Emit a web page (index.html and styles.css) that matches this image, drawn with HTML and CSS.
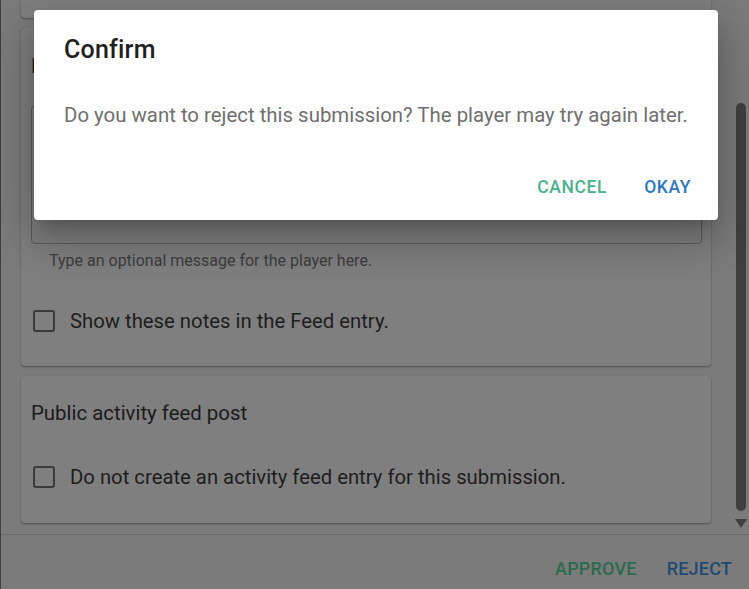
FILE: index.html
```html
<!DOCTYPE html>
<html>
<head>
<meta charset="utf-8">
<link rel="stylesheet" href="styles.css">
</head>
<body>
<div class="app">
  <div class="main">
    <div class="content">
      <div class="card cut"></div>
      <div class="card notes">
        <div class="card-title">Rejection notes</div>
        <div class="textarea"></div>
        <div class="hint">Type an optional message for the player here.</div>
        <label class="check"><span class="box"></span><span>Show these notes in the Feed entry.</span></label>
      </div>
      <div class="card feed">
        <div class="card-title">Public activity feed post</div>
        <label class="check"><span class="box"></span><span>Do not create an activity feed entry for this submission.</span></label>
      </div>
    </div>
    <div class="scrollbar">
      <div class="thumb"></div>
      <div class="arrow"></div>
    </div>
  </div>
  <div class="actions">
    <span class="btn approve">APPROVE</span>
    <span class="btn reject">REJECT</span>
  </div>
</div>
<div class="modal">
  <div class="modal-title">Confirm</div>
  <div class="modal-body">Do you want to reject this submission? The player may try again later.</div>
  <div class="modal-actions">
    <span class="mbtn cancel">CANCEL</span>
    <span class="mbtn okay">OKAY</span>
  </div>
</div>
</body>
</html>
```
FILE: styles.css
```css
html, body { margin: 0; padding: 0; }
body {
  width: 749px;
  height: 589px;
  overflow: hidden;
  background: #7b7b7b;
  font-family: Roboto, "Liberation Sans", sans-serif;
  position: relative;
}
.app {
  height: 589px;
  border-left: 1px solid #3e3e3e;
  box-sizing: border-box;
  display: flex;
  flex-direction: column;
}
.main {
  height: 535px;
  flex: none;
  display: flex;
  border-bottom: 1px solid #6b6b6b;
  box-sizing: border-box;
}
.content {
  width: 690px;
  margin-left: 20px;
  display: flex;
  flex-direction: column;
  gap: 10px;
}
.card {
  background: #7f7f7f;
  border-radius: 4px;
  box-shadow: 0 1px 2px rgba(0,0,0,0.35), 0 0 1px rgba(0,0,0,0.15);
  padding: 0 9px 0 10px;
}
.card.cut { height: 18px; border-radius: 0 0 4px 4px; }
.card.notes { height: 338px; box-sizing: border-box; padding-top: 26px; }
.card.feed { height: 147px; box-sizing: border-box; padding-top: 25px; }
.card-title {
  font-size: 20.4px;
  line-height: 24px;
  color: #1b1b1b;
}
.textarea {
  margin-top: 27px;
  height: 139px;
  box-sizing: border-box;
  border: 1px solid #5c5c5c;
  border-radius: 4px;
}
.hint {
  font-size: 16px;
  line-height: 20px;
  color: #3c3c3c;
  padding-left: 18px;
  margin-top: 7px;
}
.check {
  display: flex;
  align-items: center;
  gap: 15px;
  font-size: 20.3px;
  color: #1d1d1d;
  height: 24px;
  margin-top: 38px;
  padding-left: 2px;
}
.feed .check { margin-top: 40px; }
.box {
  width: 22px;
  height: 22px;
  box-sizing: border-box;
  border: 2px solid #3a3a3a;
  border-radius: 3px;
  flex: none;
}
.scrollbar {
  margin-left: auto;
  width: 16px;
  display: flex;
  flex-direction: column;
  align-items: center;
  padding-top: 103px;
  box-sizing: border-box;
}
.thumb {
  width: 10px;
  height: 408px;
  background: #3f3f3f;
  border-radius: 5px;
}
.arrow {
  margin-top: 8px;
  width: 0;
  height: 0;
  border-left: 6px solid transparent;
  border-right: 6px solid transparent;
  border-top: 9px solid #404040;
}
.actions {
  flex: 1;
  display: flex;
  justify-content: flex-end;
  align-items: center;
  gap: 30px;
  padding-right: 17px;
  padding-top: 12px;
}
.btn {
  font-size: 18px;
  font-weight: 500;
  letter-spacing: 0.2px;
}
.approve { color: #2b6a4e; }
.reject { color: #1f4872; }
.modal {
  position: absolute;
  left: 34px;
  top: 10px;
  width: 684px;
  height: 210px;
  background: #fff;
  border-radius: 4px;
  box-shadow: 0 11px 15px -7px rgba(0,0,0,0.2), 0 24px 38px 3px rgba(0,0,0,0.14), 0 9px 46px 8px rgba(0,0,0,0.12);
  box-sizing: border-box;
  padding: 0 27px 0 30px;
  display: flex;
  flex-direction: column;
}
.modal-title {
  font-size: 25px;
  font-weight: 500;
  letter-spacing: 0.2px;
  color: #1f1f1f;
  line-height: 32px;
  margin-top: 24px;
}
.modal-body {
  font-size: 20.4px;
  color: #6f6f6f;
  line-height: 26px;
  margin-top: 36px;
  white-space: nowrap;
}
.modal-actions {
  display: flex;
  justify-content: flex-end;
  gap: 37px;
  margin-top: 49px;
}
.mbtn {
  font-size: 17.5px;
  font-weight: 500;
  letter-spacing: 0.6px;
  line-height: 20px;
}
.cancel { color: #4caf8b; }
.okay { color: #2f77bb; }
```
